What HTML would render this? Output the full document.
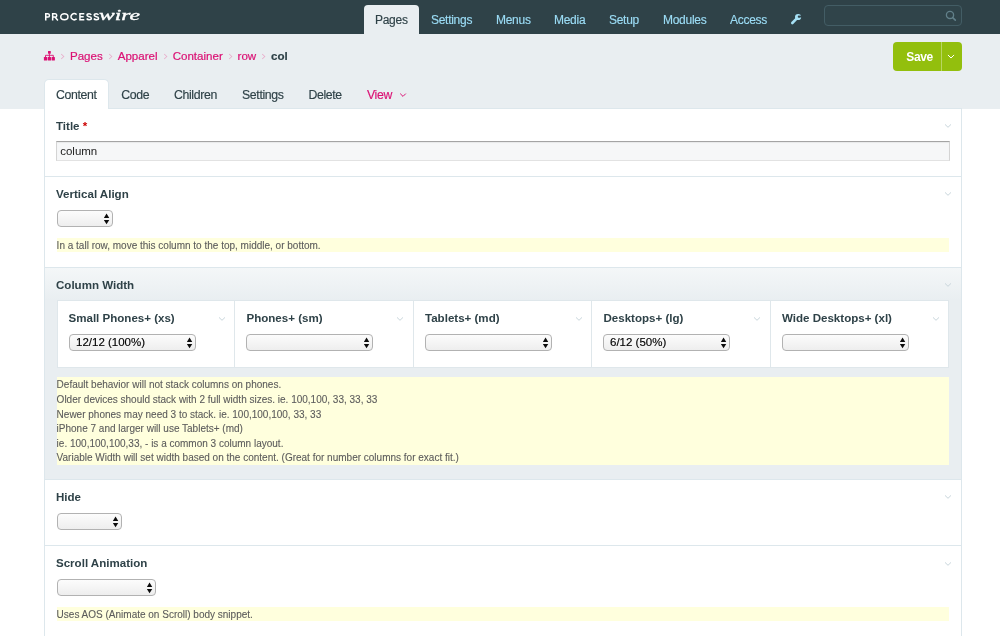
<!DOCTYPE html>
<html><head><meta charset="utf-8">
<style>
*{box-sizing:border-box;margin:0;padding:0}
html,body{width:1000px;height:636px;overflow:hidden;background:#fff;font-family:"Liberation Sans",sans-serif;color:#2f4248}
#mast{position:absolute;left:0;top:0;width:1000px;height:34px;background:#2f4248}
#sub{position:absolute;left:0;top:34px;width:1000px;height:75px;background:#e9eef1}
.abs{position:absolute;white-space:nowrap}
.nav{-webkit-text-stroke:0.15px currentColor;position:absolute;top:13.1px;font-size:12px;letter-spacing:-0.28px;color:#9bdcf5;line-height:14px}
#pagestab{position:absolute;left:364px;top:4.5px;width:55px;height:30px;background:#e9eef1;border-radius:4px 4px 0 0}
#search{position:absolute;left:824px;top:5px;width:138px;height:21px;border:1px solid #435d65;border-radius:4px;background:#30444a}
#save{position:absolute;left:893px;top:42px;width:69px;height:28.5px;background:#93bf0d;border-radius:4px}
#content{position:absolute;left:44px;top:108px;width:918px;border-top:1px solid #dde7ec;height:540px;background:#fff;border-left:1px solid #dde7ec;border-right:1px solid #dde7ec}
.tab{-webkit-text-stroke:0.15px currentColor;position:absolute;top:88px;letter-spacing:-0.36px;font-size:12.3px;line-height:14px;color:#2f4248}
#tab1{position:absolute;left:44px;top:79px;width:65px;height:30px;background:#fff;border-radius:5px 5px 0 0;border:1px solid #dde7ec;border-bottom:none}
.bc{-webkit-text-stroke:0.2px currentColor;position:absolute;top:48.6px;font-size:11.55px;line-height:14px;color:#db1174}
.sep{position:absolute;top:53.3px;width:4.5px;height:6px}
.sep:before{content:"";position:absolute;left:-1.5px;top:0.8px;width:4px;height:4px;border-top:1px solid #e9a9c9;border-right:1px solid #e9a9c9;transform:rotate(45deg) scale(0.8)}
.lbl{position:absolute;font-weight:bold;font-size:11.55px;line-height:14px;color:#2f4248}
.hr{position:absolute;left:45px;width:916px;height:1px;background:#dde7ec}
.vd{position:absolute;top:300px;width:1px;height:68px;background:#dfe7eb}
.note{-webkit-text-stroke:0.1px currentColor;position:absolute;left:57px;width:892px;background:#ffffdd;font-size:10px;color:#5c5c5c;line-height:14.6px}
.note span{position:relative;top:1.4px;left:-0.4px}
.sel{-webkit-text-stroke:0.15px currentColor;position:absolute;height:17px;border:1px solid #b2b2b2;border-radius:4px;background:linear-gradient(#fcfcfc,#eeeeee);font-size:11.5px;line-height:15.8px;color:#000;padding-left:6px}
.sel:after{content:"";position:absolute;right:2px;top:2px;width:7px;height:12px;background:#0c0c0c;clip-path:polygon(3.55px 0.5px,6.25px 4.9px,0.85px 4.9px,0.85px 6.9px,6.25px 6.9px,3.55px 11.2px,0.85px 6.9px,0.85px 4.9px)}
</style></head><body><div style="position:absolute;left:0;top:0;width:1000px;height:636px;will-change:transform;overflow:hidden">
<div id="sub"></div>
<div id="mast"></div>
<div id="pagestab"></div>
<svg class="abs" style="left:44px;top:12px" width="58" height="10" viewBox="0 0 58 10"><g fill="none" stroke="#fff" stroke-width="1.5" stroke-linejoin="miter"><path d="M1.75 8.45 V1.75 H3.9 A1.68 1.68 0 0 1 3.9 5.1 H1.75"/><path d="M8.65 8.45 V1.75 H11.2 A1.68 1.68 0 0 1 11.2 5.1 H8.65 M11 5.1 L13.9 8.45"/><ellipse cx="20.35" cy="4.72" rx="3.6" ry="2.97"/><path d="M32.6 2.55 A3.35 2.97 0 1 0 32.6 6.9"/><path d="M40.3 1.75 H35.95 V7.7 H40.3 M35.95 4.65 H39.7"/><path d="M47.25 2.9 C46.8 2.1 46 1.75 45.1 1.75 C43.8 1.75 43 2.45 43 3.3 C43 4.2 43.9 4.45 45.1 4.7 C46.4 4.95 47.35 5.3 47.35 6.2 C47.35 7.15 46.4 7.7 45.1 7.7 C44.1 7.7 43.2 7.35 42.7 6.5"/><path transform="translate(7.2 0)" d="M47.25 2.9 C46.8 2.1 46 1.75 45.1 1.75 C43.8 1.75 43 2.45 43 3.3 C43 4.2 43.9 4.45 45.1 4.7 C46.4 4.95 47.35 5.3 47.35 6.2 C47.35 7.15 46.4 7.7 45.1 7.7 C44.1 7.7 43.2 7.35 42.7 6.5"/></g></svg>
<div class="abs" style="left:99.4px;top:7.0px;color:#fff;font-size:14.6px;line-height:16px;font-family:'Liberation Serif',serif;font-style:italic;font-weight:normal;-webkit-text-stroke:0.35px #fff;transform:scaleX(1.61);transform-origin:0 0">wire</div>
<div class="nav" style="left:375px;color:#2f4248">Pages</div>
<div class="nav" style="left:431px">Settings</div>
<div class="nav" style="left:496px">Menus</div>
<div class="nav" style="left:554px">Media</div>
<div class="nav" style="left:609px">Setup</div>
<div class="nav" style="left:663px">Modules</div>
<div class="nav" style="left:730px">Access</div>
<svg class="abs" style="left:789px;top:12px" width="14" height="14" viewBox="0 0 14 14"><path d="M3.3 11 L7.6 6.7" stroke="#a5e0f5" stroke-width="2.6" stroke-linecap="round" fill="none"/><circle cx="9.1" cy="5" r="3.1" fill="#a5e0f5"/><circle cx="9.9" cy="4.7" r="1.15" fill="#2f4248"/><path d="M9.9 3.9 L13.5 2.9 L13.5 5.5 L9.9 5.5 Z" fill="#2f4248"/></svg>
<div id="search"></div>
<svg class="abs" style="left:944px;top:9px" width="16" height="14" viewBox="0 0 16 14"><circle cx="6" cy="5.9" r="3.6" fill="none" stroke="#62808a" stroke-width="1.3"/><path d="M8.7 8.6 L11.3 11.1" stroke="#62808a" stroke-width="1.6" stroke-linecap="round"/></svg>
<div id="save"></div>
<div class="abs" style="left:906.3px;top:50px;color:#fff;font-weight:bold;font-size:12px;line-height:14px;letter-spacing:-0.35px">Save</div>
<div class="abs" style="left:941px;top:42px;width:1px;height:28.5px;background:#b9d662"></div>
<svg class="abs" style="left:946px;top:53px" width="10" height="8" viewBox="0 0 10 8"><path d="M2.2 2.2 L5 5 L7.8 2.2" stroke="#fff" stroke-width="1" fill="none" stroke-linecap="round" stroke-linejoin="round"/></svg>
<svg class="abs" style="left:43px;top:50px" width="13" height="12" viewBox="0 0 13 12"><g fill="#db1174"><rect x="5" y="0.9" width="2.8" height="2.8" rx="0.4"/><rect x="0.9" y="6.9" width="3.3" height="3.6" rx="0.5"/><rect x="4.75" y="6.9" width="3.3" height="3.6" rx="0.5"/><rect x="8.6" y="6.9" width="3.3" height="3.6" rx="0.5"/></g><path d="M6.4 3.5 V7 M2.5 7 V5.3 H10.3 V7" stroke="#db1174" stroke-width="0.9" fill="none"/></svg>
<div class="sep" style="left:60.5px"></div><div class="sep" style="left:108px"></div><div class="sep" style="left:163px"></div><div class="sep" style="left:228px"></div><div class="sep" style="left:261.5px"></div>
<div class="bc" style="left:70px">Pages</div>
<div class="bc" style="left:117.7px">Apparel</div>
<div class="bc" style="left:172.7px">Container</div>
<div class="bc" style="left:237.6px">row</div>
<div class="bc" style="left:271px;color:#2f4248;font-weight:bold">col</div>
<div id="content"></div>
<div id="tab1"></div>
<div class="tab" style="left:56px">Content</div>
<div class="tab" style="left:121.2px">Code</div>
<div class="tab" style="left:174px">Children</div>
<div class="tab" style="left:242px">Settings</div>
<div class="tab" style="left:308.4px">Delete</div>
<div class="tab" style="left:367px;color:#db1174">View</div>
<svg class="abs" style="left:398px;top:90.5px" width="10" height="8" viewBox="0 0 10 8"><path d="M2.2 2.6 L5 5.4 L7.8 2.6" stroke="#db1174" stroke-width="1" fill="none"/></svg>

<div class="lbl" style="left:56px;top:119px">Title <span style="color:#c00">*</span></div>
<div class="abs" style="left:56px;top:141px;width:894px;height:20px;border:1px solid #d4d4d4;border-top-color:#a4a4a4;border-bottom-color:#e2e2e2;box-shadow:inset 0 1px 1px rgba(0,0,0,0.06);background:#f6f7f8;font-size:11.5px;line-height:18px;padding-left:3.2px;color:#222">column</div>
<div class="hr" style="top:176px"></div>
<div class="lbl" style="left:56px;top:187px">Vertical Align</div>
<div class="sel" style="left:57px;top:210px;width:56px"></div>
<div class="note" style="top:237.5px"><span>In a tall row, move this column to the top, middle, or bottom.</span></div>
<div class="hr" style="top:267px"></div>

<div class="abs" style="left:45px;top:268px;width:916px;height:211px;background:linear-gradient(#f4f7f8,#e9eef1 32px)"></div>
<div class="lbl" style="left:56px;top:278px">Column Width</div>
<div class="abs" style="left:57px;top:300px;width:892px;height:68px;background:#fff;border:1px solid #dfe7eb"></div>
<div class="vd" style="left:234px"></div><div class="vd" style="left:413px"></div><div class="vd" style="left:591px"></div><div class="vd" style="left:770px"></div>
<div class="lbl" style="left:68.5px;top:310.6px">Small Phones+ (xs)</div>
<div class="lbl" style="left:246.5px;top:310.6px">Phones+ (sm)</div>
<div class="lbl" style="left:425px;top:310.6px">Tablets+ (md)</div>
<div class="lbl" style="left:603.5px;top:310.6px">Desktops+ (lg)</div>
<div class="lbl" style="left:782px;top:310.6px">Wide Desktops+ (xl)</div>
<div class="sel" style="left:69px;top:334px;width:127px">12/12 (100%)</div>
<div class="sel" style="left:246px;top:334px;width:127px"></div>
<div class="sel" style="left:425px;top:334px;width:127px"></div>
<div class="sel" style="left:603px;top:334px;width:127px">6/12 (50%)</div>
<div class="sel" style="left:782px;top:334px;width:127px"></div>
<div class="note" style="top:377px"><span>Default behavior will not stack columns on phones.<br>Older devices should stack with 2 full width sizes. ie. 100,100, 33, 33, 33<br>Newer phones may need 3 to stack. ie. 100,100,100, 33, 33<br>iPhone 7 and larger will use Tablets+ (md)<br>ie. 100,100,100,33, - is a common 3 column layout.<br>Variable Width will set width based on the content. (Great for number columns for exact fit.)</span></div>
<div class="hr" style="top:479px"></div>
<div class="lbl" style="left:56px;top:490px">Hide</div>
<div class="sel" style="left:57px;top:513px;width:65px"></div>
<div class="hr" style="top:545px"></div>
<div class="lbl" style="left:56px;top:556px">Scroll Animation</div>
<div class="sel" style="left:57px;top:579px;width:99px"></div>
<div class="note" style="top:606.5px"><span>Uses AOS (Animate on Scroll) body snippet.</span></div>
<svg class="abs" style="left:943.0px;top:122.3px" width="10" height="8" viewBox="0 0 10 8"><path d="M2 2.4 L5 5.3 L8 2.4" stroke="#c9d6dc" stroke-width="1" fill="none"/></svg>
<svg class="abs" style="left:943.0px;top:189.8px" width="10" height="8" viewBox="0 0 10 8"><path d="M2 2.4 L5 5.3 L8 2.4" stroke="#c9d6dc" stroke-width="1" fill="none"/></svg>
<svg class="abs" style="left:943.0px;top:281.1px" width="10" height="8" viewBox="0 0 10 8"><path d="M2 2.4 L5 5.3 L8 2.4" stroke="#c9d6dc" stroke-width="1" fill="none"/></svg>
<svg class="abs" style="left:943.0px;top:492.9px" width="10" height="8" viewBox="0 0 10 8"><path d="M2 2.4 L5 5.3 L8 2.4" stroke="#c9d6dc" stroke-width="1" fill="none"/></svg>
<svg class="abs" style="left:943.0px;top:559.6px" width="10" height="8" viewBox="0 0 10 8"><path d="M2 2.4 L5 5.3 L8 2.4" stroke="#c9d6dc" stroke-width="1" fill="none"/></svg>
<svg class="abs" style="left:216.6px;top:315.4px" width="10" height="8" viewBox="0 0 10 8"><path d="M2 2.4 L5 5.3 L8 2.4" stroke="#c9d6dc" stroke-width="1" fill="none"/></svg>
<svg class="abs" style="left:395.0px;top:315.4px" width="10" height="8" viewBox="0 0 10 8"><path d="M2 2.4 L5 5.3 L8 2.4" stroke="#c9d6dc" stroke-width="1" fill="none"/></svg>
<svg class="abs" style="left:573.6px;top:315.4px" width="10" height="8" viewBox="0 0 10 8"><path d="M2 2.4 L5 5.3 L8 2.4" stroke="#c9d6dc" stroke-width="1" fill="none"/></svg>
<svg class="abs" style="left:752.0px;top:315.4px" width="10" height="8" viewBox="0 0 10 8"><path d="M2 2.4 L5 5.3 L8 2.4" stroke="#c9d6dc" stroke-width="1" fill="none"/></svg>
<svg class="abs" style="left:931.0px;top:315.4px" width="10" height="8" viewBox="0 0 10 8"><path d="M2 2.4 L5 5.3 L8 2.4" stroke="#c9d6dc" stroke-width="1" fill="none"/></svg>
</div></body></html>
